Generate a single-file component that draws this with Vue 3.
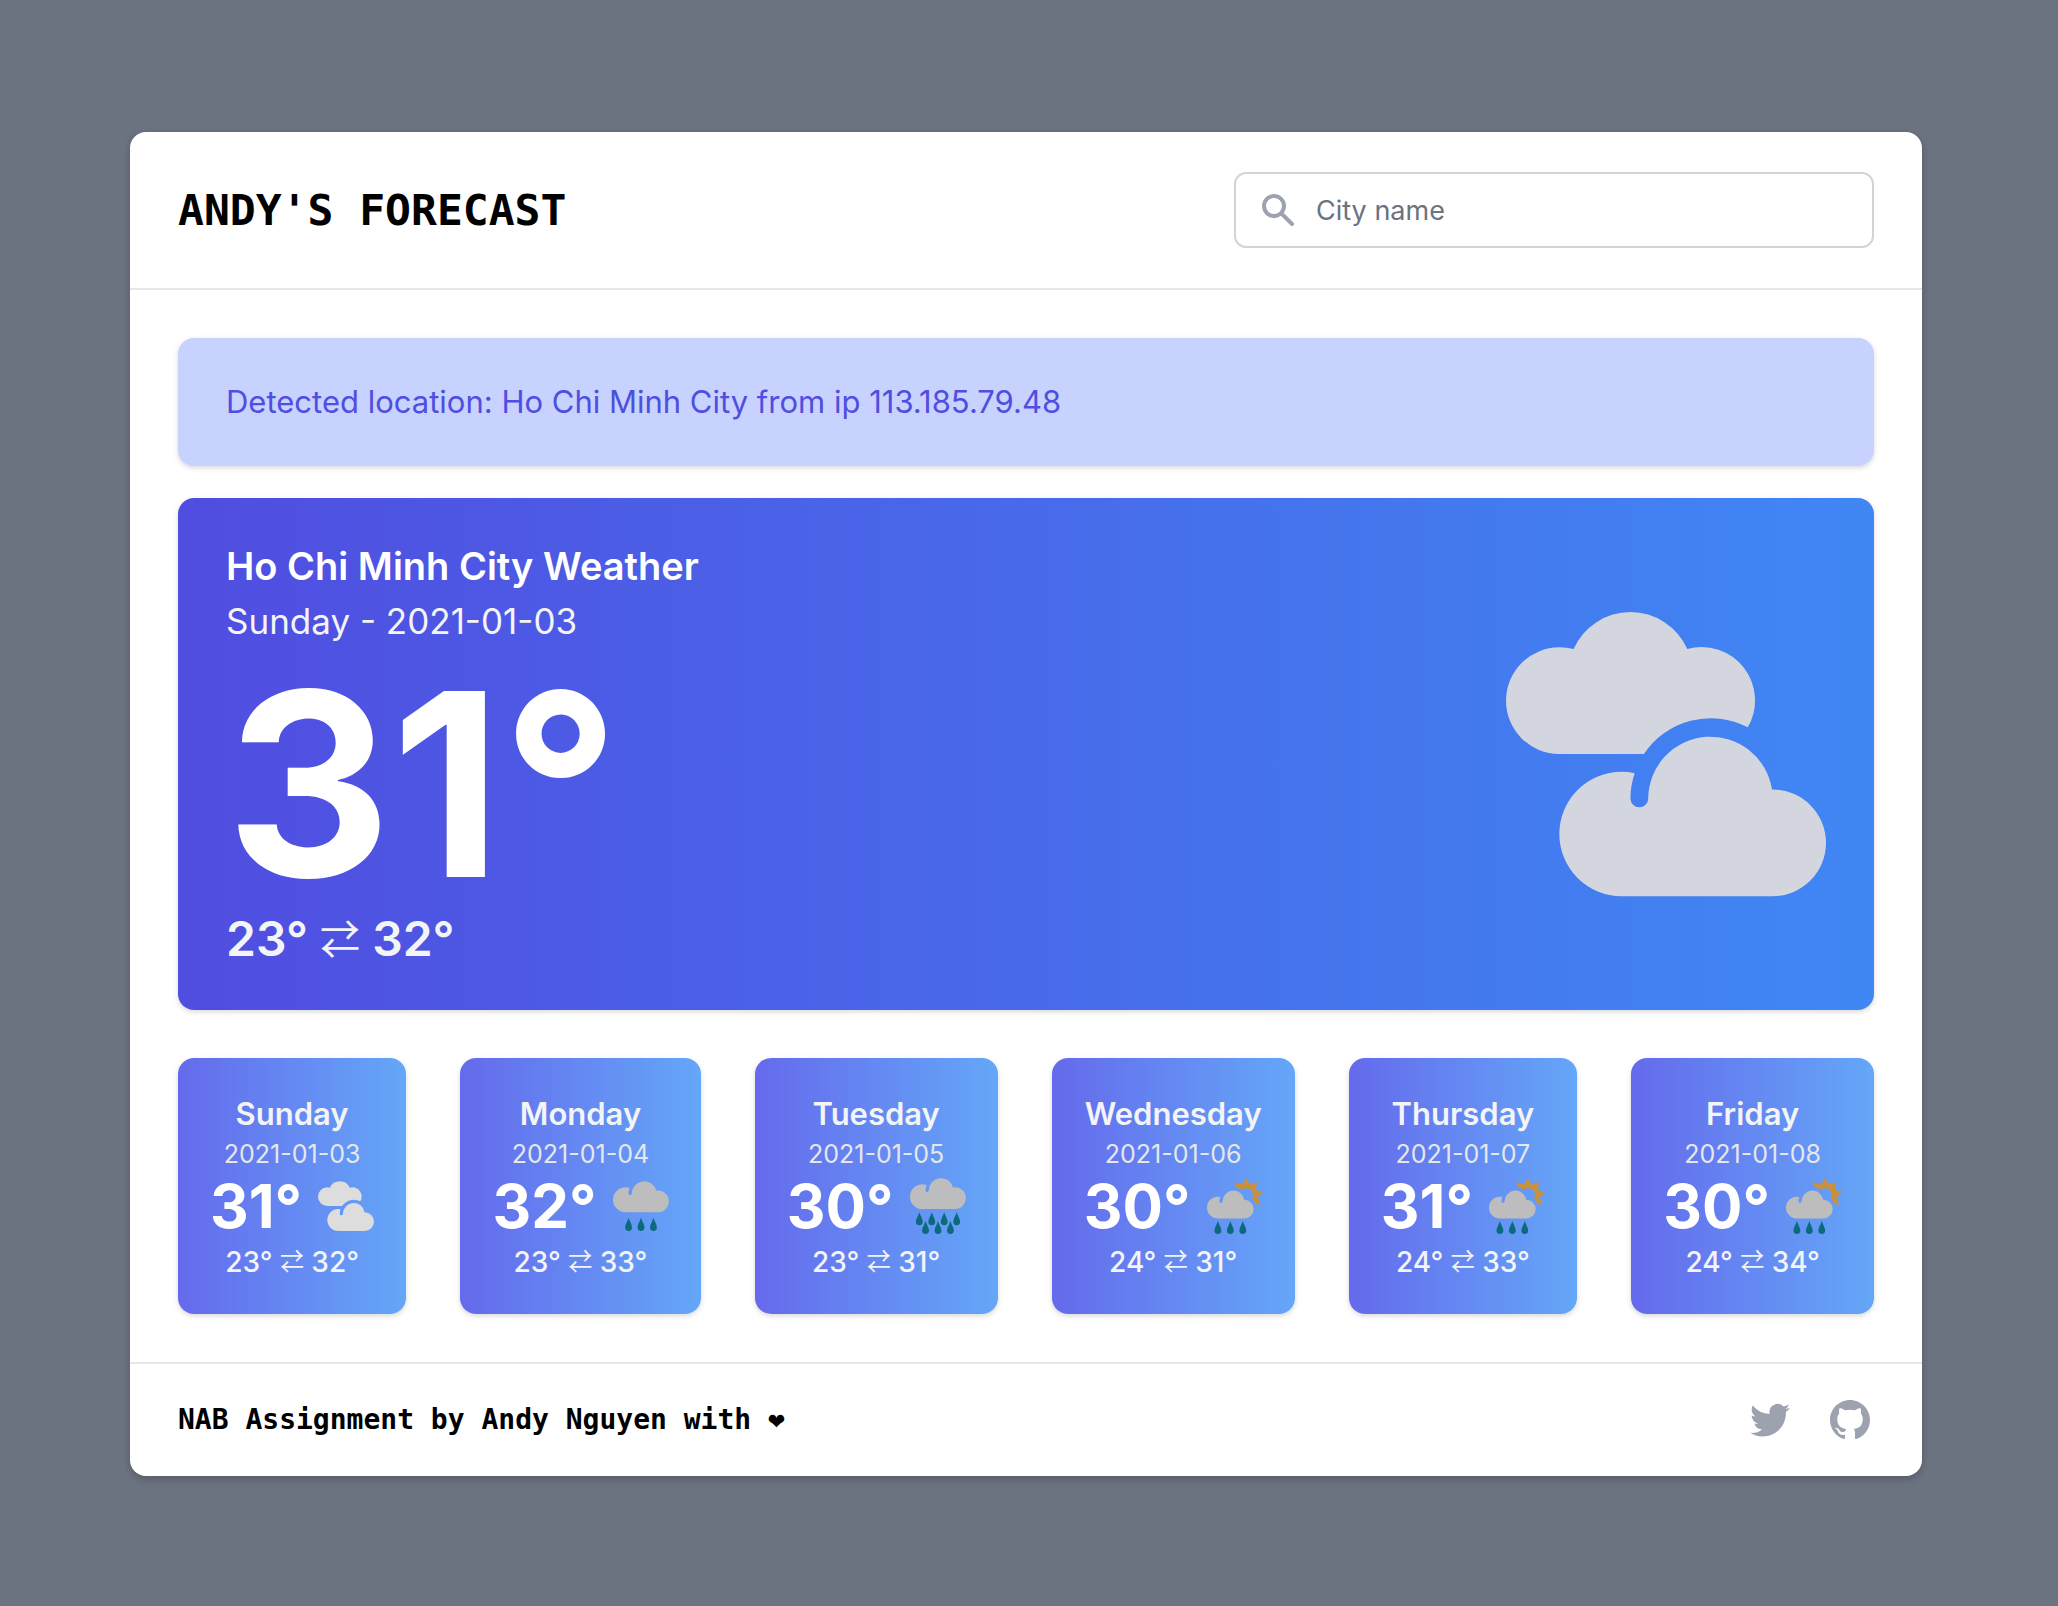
<script setup>
const days = [
  { name: 'Sunday', date: '2021-01-03', temp: 31, min: 23, max: 32, icon: 'cloudy' },
  { name: 'Monday', date: '2021-01-04', temp: 32, min: 23, max: 33, icon: 'light-rain' },
  { name: 'Tuesday', date: '2021-01-05', temp: 30, min: 23, max: 31, icon: 'heavy-rain' },
  { name: 'Wednesday', date: '2021-01-06', temp: 30, min: 24, max: 31, icon: 'showers' },
  { name: 'Thursday', date: '2021-01-07', temp: 31, min: 24, max: 33, icon: 'showers' },
  { name: 'Friday', date: '2021-01-08', temp: 30, min: 24, max: 34, icon: 'showers' },
]

const wideCloud = 'M4 10A4 4 0 0 1 4 2A4 4 0 0 1 5.35 2.24A5 5 0 0 0 5 4A.5 .5 0 0 0 6 4A4 4 0 0 1 13.87 3.05A3.5 3.5 0 1 1 14.5 10Z'
const smallCloud = 'M3.5 9A3.5 3.5 0 0 1 3.5 2A3.5 3.5 0 0 1 4.24 2.08A4.5 4.5 0 0 0 4 3.5A.5 .5 0 0 0 5 3.5A3.5 3.5 0 0 1 11.96 3H12A3 3 0 0 1 12 9Z'

const drops = (points) =>
  points
    .map(([x, y]) => `M${x} ${y}c.3 1.2 1.1 2 1.1 3.1a1.1 1.1 0 0 1-2.2 0c0-1.1 .8-1.9 1.1-3.1z`)
    .join('')

// Nine-rayed sun with a hollow centre.
const sunPath = (cx, cy, tip, valley, hole) => {
  const points = []
  for (let i = 0; i < 18; i++) {
    const angle = ((-90 + i * 20) * Math.PI) / 180
    const radius = i % 2 ? valley : tip
    points.push(`${(cx + radius * Math.cos(angle)).toFixed(2)} ${(cy + radius * Math.sin(angle)).toFixed(2)}`)
  }
  return `M${points.join('L')}ZM${cx - hole} ${cy}a${hole} ${hole} 0 1 0 ${2 * hole} 0a${hole} ${hole} 0 1 0 ${-2 * hole} 0Z`
}

const lightDrops = drops([[5, 12.8], [9, 12.8], [13, 12.8]])
const heavyDrops = drops([[3, 11], [7, 11], [11, 11], [15, 11], [5, 13.8], [9, 13.8], [13, 13.8]])
const showerDrops = drops([[3.5, 13.8], [7.5, 13.8], [11.5, 13.8]])
const sun = sunPath(12.5, 5.6, 5.6, 3.7, 2.3)
</script>

<template>
  <svg class="sprite" width="0" height="0" aria-hidden="true">
    <mask id="sun-mask" maskUnits="userSpaceOnUse" x="0" y="-1" width="19" height="19">
      <rect x="0" y="-1" width="19" height="19" fill="#fff" />
      <circle cx="8.5" cy="7.5" r="4.5" fill="#000" />
      <circle cx="12" cy="10" r="4" fill="#000" />
    </mask>
    <symbol id="cloudy" viewBox="0 0 18 18">
      <path d="M3 9A3 3 0 0 1 3 3A3 3 0 0 1 3.8 3.1A3.5 3.5 0 0 1 10.2 3.1A3 3 0 0 1 13.6 7.5A4.5 4.5 0 0 0 7.76 9Z" />
      <path transform="translate(3 8)" :d="smallCloud" />
    </symbol>
    <symbol id="light-rain" viewBox="0 0 18 18">
      <path transform="translate(0 1)" :d="wideCloud" />
      <path fill="#0b6a7c" :d="lightDrops" />
    </symbol>
    <symbol id="heavy-rain" viewBox="0 0 18 18">
      <path :d="wideCloud" />
      <path fill="#0b6a7c" :d="heavyDrops" />
    </symbol>
    <symbol id="showers" viewBox="0 0 18 18">
      <path fill="#c8903f" fill-rule="evenodd" mask="url(#sun-mask)" :d="sun" />
      <path transform="translate(0 4)" :d="smallCloud" />
      <path fill="#0b6a7c" :d="showerDrops" />
    </symbol>
  </svg>

  <div class="page">
    <main class="panel">
      <header class="header">
        <h1 class="brand">ANDY'S FORECAST</h1>
        <div class="search">
          <svg class="search-icon" viewBox="0 0 20 20" aria-hidden="true">
            <path d="M8 4a4 4 0 100 8 4 4 0 000-8zM2 8a6 6 0 1110.89 3.476l4.817 4.817a1 1 0 01-1.414 1.414l-4.816-4.816A6 6 0 012 8z" />
          </svg>
          <input type="text" placeholder="City name" aria-label="City name" />
        </div>
      </header>

      <div class="content">
        <p class="notice">Detected location: Ho Chi Minh City from ip 113.185.79.48</p>

        <section class="today">
          <div>
            <h2>Ho Chi Minh City Weather</h2>
            <p class="today-date">Sunday - 2021-01-03</p>
            <p class="today-temp">31°</p>
            <p class="today-range">23° <span class="arrows">⇄</span> 32°</p>
          </div>
          <svg class="today-icon" aria-hidden="true"><use href="#cloudy" /></svg>
        </section>

        <section class="days">
          <article v-for="day in days" :key="day.date" class="day">
            <h3>{{ day.name }}</h3>
            <p class="day-date">{{ day.date }}</p>
            <div class="day-now">
              <span>{{ day.temp }}°</span>
              <svg class="day-icon" :class="{ pale: day.icon === 'cloudy' }" aria-hidden="true">
                <use :href="'#' + day.icon" />
              </svg>
            </div>
            <p class="day-range">{{ day.min }}° <span class="arrows">⇄</span> {{ day.max }}°</p>
          </article>
        </section>
      </div>

      <footer class="footer">
        <p>NAB Assignment by Andy Nguyen with ❤</p>
        <nav class="social">
          <a href="#twitter" aria-label="Twitter">
            <svg viewBox="0 0 24 24" aria-hidden="true">
              <path d="M8.29 20.251c7.547 0 11.675-6.253 11.675-11.675 0-.178 0-.355-.012-.53A8.348 8.348 0 0022 5.92a8.19 8.19 0 01-2.357.646 4.118 4.118 0 001.804-2.27 8.224 8.224 0 01-2.605.996 4.107 4.107 0 00-6.993 3.743 11.65 11.65 0 01-8.457-4.287 4.106 4.106 0 001.27 5.477A4.072 4.072 0 012.8 9.713v.052a4.105 4.105 0 003.292 4.022 4.095 4.095 0 01-1.853.07 4.108 4.108 0 003.834 2.85A8.233 8.233 0 012 18.407a11.616 11.616 0 006.29 1.84" />
            </svg>
          </a>
          <a href="#github" aria-label="GitHub">
            <svg viewBox="0 0 24 24" aria-hidden="true">
              <path fill-rule="evenodd" d="M12 2C6.477 2 2 6.484 2 12.017c0 4.425 2.865 8.18 6.839 9.504.5.092.682-.217.682-.483 0-.237-.008-.868-.013-1.703-2.782.605-3.369-1.343-3.369-1.343-.454-1.158-1.11-1.466-1.11-1.466-.908-.62.069-.608.069-.608 1.003.07 1.531 1.032 1.531 1.032.892 1.53 2.341 1.088 2.91.832.092-.647.35-1.088.636-1.338-2.22-.253-4.555-1.113-4.555-4.951 0-1.093.39-1.988 1.029-2.688-.103-.253-.446-1.272.098-2.65 0 0 .84-.27 2.75 1.026A9.564 9.564 0 0112 6.844c.85.004 1.705.115 2.504.337 1.909-1.296 2.747-1.027 2.747-1.027.546 1.379.202 2.398.1 2.651.64.7 1.028 1.595 1.028 2.688 0 3.848-2.339 4.695-4.566 4.943.359.309.678.92.678 1.855 0 1.338-.012 2.419-.012 2.747 0 .268.18.58.688.482A10.019 10.019 0 0022 12.017C22 6.484 17.522 2 12 2z" clip-rule="evenodd" />
            </svg>
          </a>
        </nav>
      </footer>
    </main>
  </div>
</template>

<style>
body {
  margin: 0;
  background: #6b7280;
}
</style>

<style scoped>
* {
  box-sizing: border-box;
}
h1,
h2,
h3,
p {
  margin: 0;
}
.sprite {
  position: absolute;
}
.page {
  padding: 132px 136px 130px 130px;
  font-family: Inter, "DejaVu Sans", sans-serif;
}
.panel {
  background: #fff;
  border-radius: 16px;
  box-shadow: 0 2px 6px rgba(0, 0, 0, 0.1), 0 4px 8px rgba(0, 0, 0, 0.1);
}
.header {
  display: flex;
  align-items: center;
  justify-content: space-between;
  padding: 40px 48px;
  border-bottom: 2px solid #e5e7eb;
}
.brand {
  font: bold 43px/64px "DejaVu Sans Mono", monospace;
}
.search {
  position: relative;
  width: 640px;
}
.search-icon {
  position: absolute;
  left: 24px;
  top: 18px;
  width: 40px;
  height: 40px;
  fill: #9ca3af;
}
input {
  display: block;
  width: 100%;
  height: 76px;
  padding: 0 24px 0 80px;
  border: 2px solid #d1d5db;
  border-radius: 12px;
  background: transparent;
  color: #111827;
  font: 27px Inter, sans-serif;
}
input::placeholder {
  color: #6b7280;
  opacity: 1;
}
.content {
  padding: 48px;
}
.notice,
.today,
.day {
  border-radius: 16px;
  box-shadow: 0 2px 6px rgba(0, 0, 0, 0.1), 0 2px 4px rgba(0, 0, 0, 0.06);
}
.notice {
  padding: 48px;
  background: #c7d2fe;
  color: #504ee0;
  font-size: 31px;
  line-height: 32px;
}
.today {
  display: flex;
  justify-content: space-between;
  align-items: center;
  margin-top: 32px;
  padding: 48px;
  background: linear-gradient(to right, #504de0, #4087f4);
  color: #f3f4f6;
}
h2 {
  color: #fff;
  font-size: 38px;
  line-height: 40px;
  font-weight: 600;
}
.today-date {
  margin: 8px 0 12px;
  font-size: 35px;
  line-height: 54px;
}
.today-temp {
  color: #fff;
  font-size: 256px;
  line-height: 248px;
  font-weight: 700;
}
.today-range {
  margin-top: 8px;
  font-size: 48px;
  line-height: 46px;
  font-weight: 600;
}
.arrows {
  font-family: "Noto Sans CJK JP", "DejaVu Sans", sans-serif;
  font-size: 24px;
  font-weight: 400;
  line-height: 0;
  vertical-align: 2px;
}
.today-range .arrows {
  font-size: 40px;
}
.today-icon {
  width: 320px;
  height: 320px;
  fill: #d3d6de;
}
.days {
  display: flex;
  justify-content: space-between;
  margin-top: 48px;
}
.day {
  padding: 32px;
  background: linear-gradient(to right, #656aec, #64a7f8);
  color: #f3f4f6;
  text-align: center;
}
h3 {
  font-size: 31px;
  line-height: 48px;
  font-weight: 600;
}
.day-date {
  color: #e5e7eb;
  font-size: 25px;
  line-height: 32px;
}
.day-now {
  display: flex;
  gap: 16px;
  align-items: center;
  justify-content: center;
  color: #fff;
  font-size: 60px;
  line-height: 72px;
  font-weight: 700;
}
.day-icon {
  width: 56px;
  height: 56px;
  fill: #bdbdbd;
}
.day-icon.pale {
  fill: #ddd;
}
.day-range {
  font-size: 28px;
  line-height: 40px;
  font-weight: 500;
}
.footer {
  display: flex;
  align-items: center;
  justify-content: space-between;
  padding: 32px 48px;
  border-top: 2px solid #e5e7eb;
  font: bold 28px/48px "DejaVu Sans Mono", monospace;
}
.social {
  display: flex;
  gap: 32px;
}
.social svg {
  display: block;
  width: 48px;
  height: 48px;
  fill: #9ca3af;
}
</style>
